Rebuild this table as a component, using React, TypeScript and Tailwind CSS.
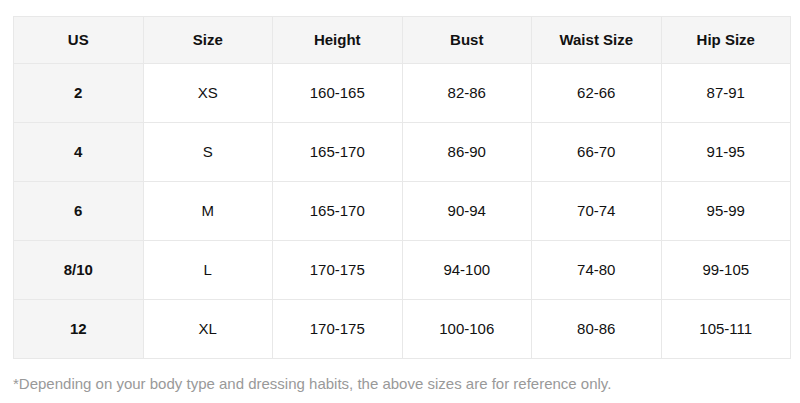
import React from 'react';

const headers = ['US', 'Size', 'Height', 'Bust', 'Waist Size', 'Hip Size'];

const rows = [
  ['2', 'XS', '160-165', '82-86', '62-66', '87-91'],
  ['4', 'S', '165-170', '86-90', '66-70', '91-95'],
  ['6', 'M', '165-170', '90-94', '70-74', '95-99'],
  ['8/10', 'L', '170-175', '94-100', '74-80', '99-105'],
  ['12', 'XL', '170-175', '100-106', '80-86', '105-111'],
];

export default function App() {
  return (
    <div className="w-[800px] h-[403px] bg-white px-[13px] pt-[16px] font-['Liberation_Sans',Arial,sans-serif] text-[#111]">
      {/* 사이즈 표 */}
      <table className="w-[778px] table-fixed border-collapse border border-[#e8e8e8] text-[15px]">
        <thead>
          <tr className="h-[47px] bg-[#f5f5f5]">
            {headers.map((h) => (
              <th key={h} className="border border-[#e8e8e8] text-center font-bold">
                {h}
              </th>
            ))}
          </tr>
        </thead>
        <tbody>
          {rows.map((row) => (
            <tr key={row[0]} className="h-[59px]">
              {row.map((cell, i) => (
                <td
                  key={i}
                  className={`border border-[#e8e8e8] text-center ${
                    i === 0 ? 'bg-[#f5f5f5] font-bold' : 'bg-white'
                  }`}
                >
                  {cell}
                </td>
              ))}
            </tr>
          ))}
        </tbody>
      </table>

      <p className="mt-[14px] text-[15px] text-[#999]">
        *Depending on your body type and dressing habits, the above sizes are for reference only.
      </p>
    </div>
  );
}
